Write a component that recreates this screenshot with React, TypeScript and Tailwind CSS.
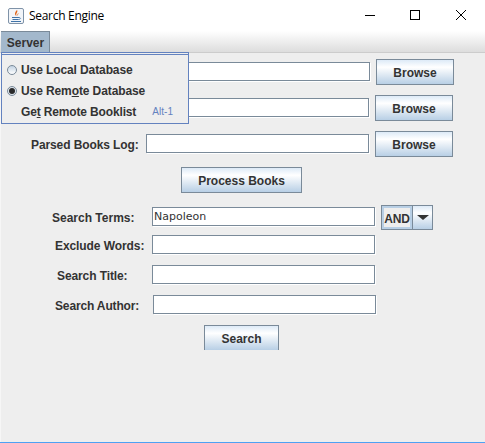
const label = "font-['Liberation_Sans',sans-serif] text-[12px] leading-[14px] font-bold text-[#333] whitespace-nowrap";

function MetalButton({ text, className }: { text: string; className: string }) {
  return (
    <button className={`${label} flex shrink-0 items-center justify-center border border-[#7a8a99] bg-gradient-to-b from-[#ddeaf7] via-white via-[30%] to-[#b8cfe5] pt-[2px] ${className}`}>
      {text}
    </button>
  );
}

function Field({ className, value }: { className: string; value?: string }) {
  return (
    <div className={`mb-px flex h-[19px] shrink-0 items-center border-t border-l border-[#7a8a99] bg-white pl-px font-['DejaVu_Sans',sans-serif] text-[11px] text-[#333] shadow-[inset_-1px_-1px_0_#7a8a99,1px_1px_0_#fff] ${className}`}>
      {value}
    </div>
  );
}

function JavaIcon() {
  return (
    <svg width="16" height="16" viewBox="0 0 16 16" className="shrink-0">
      <rect x="0.5" y="0.5" width="15" height="15" rx="1.5" fill="#f2f5f9" stroke="#7f93a8" />
      <path d="M9 2 C10.5 4 7.5 5 8.5 8 C6 6.5 7 4 9 2 Z M10.5 5 C10.5 6.5 9.5 6.5 10 8 C9 7 9.2 6 10.5 5 Z" fill="#e0661c" />
      <path d="M4 9.5 H11 M4.5 11.5 H10.5 M3 13.5 H13" stroke="#3f73a8" strokeWidth="1" fill="none" />
      <path d="M11 9.5 C13 9.5 13 11.5 10.5 11.5" stroke="#3f73a8" strokeWidth="0.8" fill="none" />
    </svg>
  );
}

function ServerMenu() {
  const item = `${label} flex h-[21px] items-center tracking-[-0.1px]`;
  return (
    <div className="absolute left-[1px] top-[52px] h-[72px] w-[188px] border border-[#6382bf] bg-[#eeeeee] pl-[5px] pt-[6px]">
      <div className="absolute left-0 right-0 top-[1px] h-px bg-[#6382bf]" />
      <div className={item}>
        <span className="mr-[4px] h-[10px] w-[10px] rounded-full border border-[#7a8a99] bg-gradient-to-b from-[#c3d3e3] to-white" />
        Use Local Database
      </div>
      <div className={item}>
        <span className="mr-[4px] flex h-[10px] w-[10px] items-center justify-center rounded-full border border-[#7a8a99] bg-[#dfe6ee]">
          <span className="h-[6px] w-[6px] rounded-full bg-[#2a2a2a]" />
        </span>
        <span>Use Rem<span className="underline">o</span>te Database</span>
      </div>
      <div className={`${item} pl-[14px]`}>
        <span className="tracking-[-0.15px]">Ge<span className="underline">t</span> Remote Booklist</span>
        <span className="ml-[16px] text-[10px] font-normal tracking-[0.05px] text-[#6382bf]">Alt-1</span>
      </div>
    </div>
  );
}

export default function App() {
  return (
    <div className="relative flex h-[443px] w-[485px] flex-col overflow-hidden bg-[#eeeeee] shadow-[inset_1px_0_0_#f6f6f6]">
      {/* Window title bar */}
      <div className="flex h-[31px] shrink-0 items-center bg-white pl-[8px]">
        <JavaIcon />
        <span className="ml-[5px] font-['Open_Sans',sans-serif] text-[12px] tracking-[-0.3px] text-black">Search Engine</span>
        <div className="ml-auto flex items-center">
          <svg width="136" height="31" viewBox="0 0 136 31" fill="none" stroke="#000" strokeWidth="1">
            <path d="M16 15.5 H26" />
            <rect x="61.5" y="10.5" width="9" height="9" />
            <path d="M107 10 L117 20 M117 10 L107 20" />
          </svg>
        </div>
      </div>

      {/* Menu bar */}
      <div className="flex h-[22px] shrink-0 items-stretch border-b border-[#cccccc] bg-gradient-to-b from-white to-[#dddddd] pl-px">
        <div className={`${label} flex w-[49px] items-center justify-center border-r border-t border-[#7a8a99] bg-[#a3b8cc] pl-px pt-px`}>Server</div>
      </div>

      <div className="flex flex-1 flex-col">
        <div className="mt-[6px] flex items-center">
          <Field className="ml-[146px] w-[224px]" />
          <MetalButton text="Browse" className="ml-[6px] h-[26px] w-[78px]" />
        </div>
        <div className="mt-[10px] flex items-center">
          <Field className="ml-[146px] w-[223px]" />
          <MetalButton text="Browse" className="ml-[6px] h-[26px] w-[78px]" />
        </div>
        <div className="mt-[10px] flex items-center">
          <span className={`${label} ml-[31px] w-[115px] pt-[2px] tracking-[-0.1px]`}>Parsed Books Log:</span>
          <Field className="w-[223px]" />
          <MetalButton text="Browse" className="ml-[6px] h-[26px] w-[78px]" />
        </div>
        <MetalButton text="Process Books" className="ml-[181px] mt-[10px] h-[26px] w-[121px]" />

        <div className="mt-[12px] flex h-[24px] items-center">
          <span className={`${label} ml-[52px] w-[100px] pt-[2px]`}>Search Terms:</span>
          <Field className="w-[223px]" value="Napoleon" />
          <div className="ml-[6px] flex h-[25px] w-[52px] self-start border border-[#7a8a99] bg-[#eeeeee]">
            <span className={`${label} flex w-[31px] items-center justify-center border-r border-[#7a8a99] pt-[2px] tracking-[-0.2px] shadow-[inset_0_0_0_2px_#b8cfe5]`}>AND</span>
            <span className="flex flex-1 items-center justify-center bg-gradient-to-b from-[#ddeaf7] via-white via-[30%] to-[#b8cfe5]">
              <span className="h-0 w-0 border-x-[6px] border-t-[5px] border-x-transparent border-t-[#333]" />
            </span>
          </div>
        </div>
        <div className="mt-[6px] flex items-center">
          <span className={`${label} ml-[55px] w-[97px] pt-[2px] tracking-[-0.08px]`}>Exclude Words:</span>
          <Field className="w-[223px]" />
        </div>
        <div className="mt-[10px] flex items-center">
          <span className={`${label} ml-[57px] w-[95px] pt-[2px] tracking-[-0.1px]`}>Search Title:</span>
          <Field className="w-[223px]" />
        </div>
        <div className="mt-[10px] flex items-center">
          <span className={`${label} ml-[55px] w-[98px] pt-[2px] tracking-[-0.15px]`}>Search Author:</span>
          <Field className="w-[223px]" />
        </div>
        <MetalButton text="Search" className="ml-[204px] mt-[10px] h-[25px] w-[75px] border-b-0" />
      </div>

      <div className="h-px shrink-0 bg-[#4ea1f3]" />
      <ServerMenu />
    </div>
  );
}
